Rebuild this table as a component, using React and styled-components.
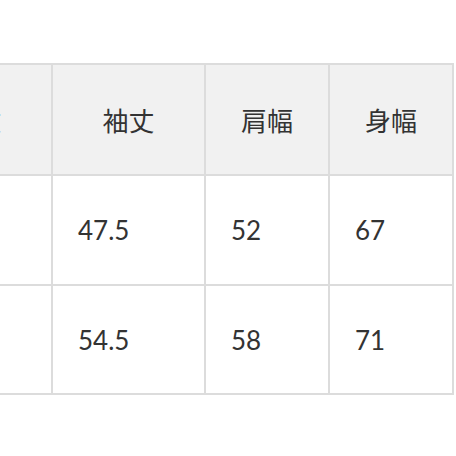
import React from "react";
import styled, { createGlobalStyle } from "styled-components";

const Global = createGlobalStyle`
  html, body { margin: 0; padding: 0; background: #fff; overflow: hidden; }
  body { width: 456px; height: 456px; }
`;

const Page = styled.div`
  width: 456px;
  height: 456px;
  padding-top: 63px;
  box-sizing: border-box;
  overflow: hidden;
  background: #fff;
`;

const Table = styled.div`
  display: grid;
  grid-template-columns: 151px 151px 122px 122px;
  grid-template-rows: 109px 108px 107px;
  gap: 2px;
  padding: 2px;
  background: #dcdcdc;
  width: max-content;
  margin-left: -102px;
`;

const Cell = styled.div`
  display: flex;
  align-items: center;
  justify-content: ${(p) => (p.$head ? "center" : "flex-start")};
  padding-left: ${(p) => (p.$head ? "0" : "25px")};
  background: ${(p) => (p.$head ? "#f1f1f1" : "#fff")};
  color: #333;
  font-family: ${(p) =>
    p.$head
      ? '"Noto Sans CJK JP", "Noto Sans", sans-serif'
      : 'Lato, "Noto Sans", sans-serif'};
  font-size: ${(p) => (p.$head ? "26px" : "26px")};
  font-weight: 400;
  white-space: nowrap;
`;

const head = ["着丈", "袖丈", "肩幅", "身幅"];
const rows = [
  ["", "47.5", "52", "67"],
  ["", "54.5", "58", "71"],
];

export default function App() {
  return (
    <>
      <Global />
      <Page>
        <Table>
          {head.map((h) => (
            <Cell key={h} $head>
              {h}
            </Cell>
          ))}
          {rows.map((r, i) =>
            r.map((v, j) => <Cell key={`${i}-${j}`}>{v}</Cell>)
          )}
        </Table>
      </Page>
    </>
  );
}
